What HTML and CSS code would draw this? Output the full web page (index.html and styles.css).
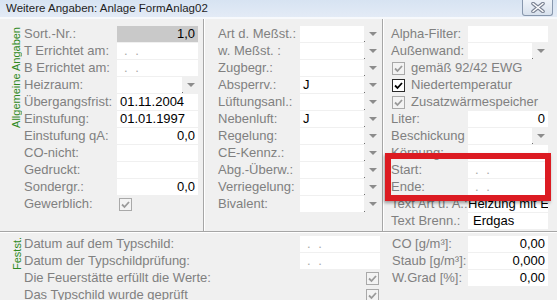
FILE: index.html
```html
<!DOCTYPE html>
<html>

<head>
    <meta charset=utf-8>
    <title>Weitere Angaben</title>
    <link rel="stylesheet" href="styles.css">
</head>

<body>
    <div class="window">
        <div class="titlebar">
            <span class="title">Weitere Angaben: Anlage FormAnlag02</span>
            <span class="close">
                <svg width="16" height="11" viewBox="0 0 16 11">
                    <path d="M3 1.5L13 9.5M13 1.5L3 9.5" stroke="#7a8394" stroke-width="3.6" stroke-linecap="round" />
                    <path d="M3 1.5L13 9.5M13 1.5L3 9.5" stroke="#fff" stroke-width="1.4" stroke-linecap="round" />
                </svg>
            </span>
        </div>

        <div class="top">
            <!-- Allgemeine Angaben -->
            <div class="panel p-left">
                <div class="vtext"><span>Allgemeine Angaben</span></div>
                <div class="rows">
                    <div class="row"><span class="lbl">Sort.-Nr.:</span><span class="field num grey">1,0</span></div>
                    <div class="row"><span class="lbl">T Errichtet am:</span><span class="field"><i class="blank">. .</i></span></div>
                    <div class="row"><span class="lbl">B Errichtet am:</span><span class="field"><i class="blank">. .</i></span></div>
                    <div class="row"><span class="lbl">Heizraum:</span><span class="combo"><span class="box"></span><span class="arrow"></span></span></div>
                    <div class="row"><span class="lbl">Übergangsfrist:</span><span class="field">01.11.2004</span></div>
                    <div class="row"><span class="lbl">Einstufung:</span><span class="field">01.01.1997</span></div>
                    <div class="row"><span class="lbl">Einstufung qA:</span><span class="field num">0,0</span></div>
                    <div class="row"><span class="lbl">CO-nicht:</span><span class="field"></span></div>
                    <div class="row"><span class="lbl">Gedruckt:</span><span class="field"></span></div>
                    <div class="row"><span class="lbl">Sondergr.:</span><span class="field num">0,0</span></div>
                    <div class="row"><span class="lbl">Gewerblich:</span><span class="cbwrap"><span class="cb"><svg viewBox="0 0 11 11"><path d="M2 5.5l2.5 2.5L9 3" /></svg></span></span></div>
                </div>
            </div>

            <!-- Messstelle -->
            <div class="panel p-mid">
                <div class="row"><span class="lbl">Art d. Meßst.:</span><span class="combo"><span class="box"></span><span class="arrow"></span></span></div>
                <div class="row"><span class="lbl">w. Meßst. :</span><span class="combo"><span class="box"></span><span class="arrow"></span></span></div>
                <div class="row"><span class="lbl">Zugbegr.:</span><span class="combo"><span class="box"></span><span class="arrow"></span></span></div>
                <div class="row"><span class="lbl">Absperrv.:</span><span class="combo"><span class="box">J</span><span class="arrow"></span></span></div>
                <div class="row"><span class="lbl">Lüftungsanl.:</span><span class="combo"><span class="box"></span><span class="arrow"></span></span></div>
                <div class="row"><span class="lbl">Nebenluft:</span><span class="combo"><span class="box">J</span><span class="arrow"></span></span></div>
                <div class="row"><span class="lbl">Regelung:</span><span class="combo"><span class="box"></span><span class="arrow"></span></span></div>
                <div class="row"><span class="lbl">CE-Kennz.:</span><span class="combo"><span class="box"></span><span class="arrow"></span></span></div>
                <div class="row"><span class="lbl">Abg.-Überw.:</span><span class="combo"><span class="box"></span><span class="arrow"></span></span></div>
                <div class="row"><span class="lbl">Verriegelung:</span><span class="combo"><span class="box"></span><span class="arrow"></span></span></div>
                <div class="row"><span class="lbl">Bivalent:</span><span class="combo"><span class="box"></span><span class="arrow"></span></span></div>
            </div>

            <!-- Filter / Brennstoff -->
            <div class="panel p-right">
                <div class="row"><span class="lbl">Alpha-Filter:</span><span class="field"></span></div>
                <div class="row"><span class="lbl">Außenwand:</span><span class="combo"><span class="box"></span><span class="arrow"></span></span></div>
                <div class="row check"><span class="cb"><svg viewBox="0 0 11 11"><path d="M2 5.5l2.5 2.5L9 3" /></svg></span><span class="lbl">gemäß 92/42 EWG</span></div>
                <div class="row check"><span class="cb on"><svg viewBox="0 0 11 11"><path d="M2 5.5l2.5 2.5L9 3" /></svg></span><span class="lbl">Niedertemperatur</span></div>
                <div class="row check"><span class="cb"><svg viewBox="0 0 11 11"><path d="M2 5.5l2.5 2.5L9 3" /></svg></span><span class="lbl">Zusatzwärmespeicher</span></div>
                <div class="row"><span class="lbl">Liter:</span><span class="field num">0</span></div>
                <div class="row"><span class="lbl">Beschickung</span><span class="combo"><span class="box"></span><span class="arrow"></span></span></div>
                <div class="row"><span class="lbl">Körnung:</span><span class="field"></span></div>
                <div class="row"><span class="lbl">Start:</span><span class="field"><i class="blank">. .</i></span></div>
                <div class="row"><span class="lbl">Ende:</span><span class="field"><i class="blank">. .</i></span></div>
                <div class="row"><span class="lbl">Text Art u. A.:</span><span class="field tight">Heizung mit Erdgas</span></div>
                <div class="row"><span class="lbl">Text Brenn.:</span><span class="field wide">Erdgas</span></div>
            </div>
        </div>

        <div class="bottom">
            <div class="b-left">
                <div class="vtext"><span>Festst.</span></div>
                <div class="rows">
                    <div class="row"><span class="lbl long">Datum auf dem Typschild:</span><span class="field"><i class="blank">. .</i></span></div>
                    <div class="row"><span class="lbl long">Datum der Typschildprüfung:</span><span class="field"><i class="blank">. .</i></span></div>
                    <div class="row"><span class="lbl long">Die Feuerstätte erfüllt die Werte:</span><span class="cbwrap end"><span class="cb"><svg viewBox="0 0 11 11"><path d="M2 5.5l2.5 2.5L9 3" /></svg></span></span></div>
                    <div class="row"><span class="lbl long">Das Typschild wurde geprüft</span><span class="cbwrap end"><span class="cb"><svg viewBox="0 0 11 11"><path d="M2 5.5l2.5 2.5L9 3" /></svg></span></span></div>
                </div>
            </div>
            <div class="b-right">
                <div class="row"><span class="lbl">CO [g/m³]:</span><span class="field num">0,00</span></div>
                <div class="row"><span class="lbl">Staub [g/m³]:</span><span class="field num">0,000</span></div>
                <div class="row"><span class="lbl">W.Grad [%]:</span><span class="field num">0,00</span></div>
            </div>
        </div>

        <!-- red marker drawn over the screenshot -->
        <div class="highlight"></div>
    </div>
</body>

</html>
```

FILE: styles.css
```css
* {
    box-sizing: border-box;
}

body {
    margin: 0;
    background: #f0f0f0;
    font-family: "Liberation Sans", Arial, sans-serif;
}

/* Whole dialog */
.window {
    position: relative;
    width: 557px;
    height: 300px;
    overflow: hidden;
    background: #f0f0f0;
}

/* Title bar */
.titlebar {
    height: 19px;
    display: flex;
    justify-content: space-between;
    align-items: flex-start;
    background: linear-gradient(#d7e3f2, #e3ebf6);
    border-bottom: 2px solid #f7f9fc;
}

.title {
    padding: 2px 0 0 6px;
    font-size: 11.5px;
    line-height: 13px;
    color: #1e1e1e;
}

.close {
    width: 31px;
    height: 16px;
    margin-right: 4px;
    display: flex;
    align-items: center;
    justify-content: center;
    border: 1px solid #8797ad;
    border-top: none;
    border-radius: 0 0 3px 3px;
    background: linear-gradient(#eef3f9, #d8e1ed);
}

/* Upper part: three group columns */
.top {
    display: grid;
    grid-template-columns: 203px 179px 1fr;
    height: 212px;
}

.panel {
    padding-top: 7px;
}

.p-left {
    display: flex;
}

.p-mid,
.p-right {
    border-left: 1px solid #a6a6a6;
    box-shadow: inset 1px 0 #fff;
}

.p-mid {
    padding-left: 14px;
}

.p-right {
    padding-left: 8px;
}

/* Green vertical captions */
.vtext {
    width: 24px;
    padding-left: 10px;
    display: flex;
    flex-direction: column;
    align-items: flex-start;
}

.vtext span {
    margin-top: 1px;
    writing-mode: vertical-rl;
    transform: rotate(180deg);
    font-size: 11px;
    line-height: 12px;
    color: #2f8a22;
    white-space: nowrap;
}

/* Label + control rows */
.row {
    display: flex;
    height: 17px;
    align-items: flex-start;
}

.lbl {
    flex: none;
    font-size: 13px;
    line-height: 16px;
    color: #808080;
    white-space: nowrap;
}

.p-left .lbl {
    width: 93px;
}

.p-mid .lbl {
    width: 82px;
}

.p-right .lbl {
    width: 77px;
}

.field {
    flex: none;
    width: 80px;
    height: 16px;
    padding: 0 3px;
    overflow: hidden;
    background: #fff;
    font-size: 13px;
    line-height: 16px;
    color: #000;
    white-space: nowrap;
}

.p-left .field {
    width: 81px;
}

.field.num {
    text-align: right;
}

.field.grey {
    background: #c9c9c9;
}

.field.tight {
    padding-left: 0;
}

.field.wide {
    padding-left: 5px;
}

.blank {
    font-style: normal;
    color: #a8a8a8;
    padding-left: 4px;
    letter-spacing: 2px;
}

/* Combo boxes */
.combo {
    flex: none;
    display: flex;
    width: 80px;
    height: 16px;
}

.p-left .combo {
    width: 81px;
}

.combo .box {
    flex: 1;
    padding: 0 3px;
    background: #fff;
    font-size: 13px;
    line-height: 16px;
    color: #000;
}

.combo .arrow {
    position: relative;
    width: 16px;
}

.combo .arrow::after {
    content: "";
    position: absolute;
    left: 5px;
    top: 6px;
    border-left: 4px solid transparent;
    border-right: 4px solid transparent;
    border-top: 4px solid #8c8c8c;
}

.combo .arrow::before {
    content: "";
    position: absolute;
    left: 0;
    bottom: 0;
    width: 1px;
    height: 1px;
    background: #707070;
}

/* Check boxes */
.cb {
    flex: none;
    display: block;
    width: 13px;
    height: 13px;
    border: 1px solid #a9a9a9;
    background: #f3f3f3;
}

.cb svg {
    display: block;
    width: 11px;
    height: 11px;
    fill: none;
    stroke: #9a9a9a;
    stroke-width: 1.8;
}

.cb.on {
    border-color: #2a2a2a;
    background: #fff;
}

.cb.on svg {
    stroke: #000;
}

.cbwrap {
    width: 81px;
    padding: 2px 0 0 2px;
}

.cbwrap.end {
    width: 80px;
    display: flex;
    justify-content: flex-end;
    padding: 2px 1px 0 0;
}

.row.check {
    padding-left: 1px;
}

.row.check .cb {
    margin: 2px 6px 0 0;
}

/* Lower part */
.bottom {
    display: grid;
    grid-template-columns: 382px 1fr;
    border-top: 1px solid #a6a6a6;
    box-shadow: inset 0 1px #fff;
    padding-top: 4px;
}

.b-left {
    display: flex;
}

.b-left .vtext {
    padding-left: 11px;
}

.lbl.long {
    width: 276px;
}

.b-right {
    padding-left: 10px;
}

.b-right .lbl {
    width: 76px;
}

/* Red marker frame */
.highlight {
    position: absolute;
    left: 385px;
    top: 153px;
    width: 166px;
    height: 48px;
    border: 6px solid #dc1b22;
    box-shadow: -1px 2px 3px rgba(0, 0, 0, 0.35);
}
```
